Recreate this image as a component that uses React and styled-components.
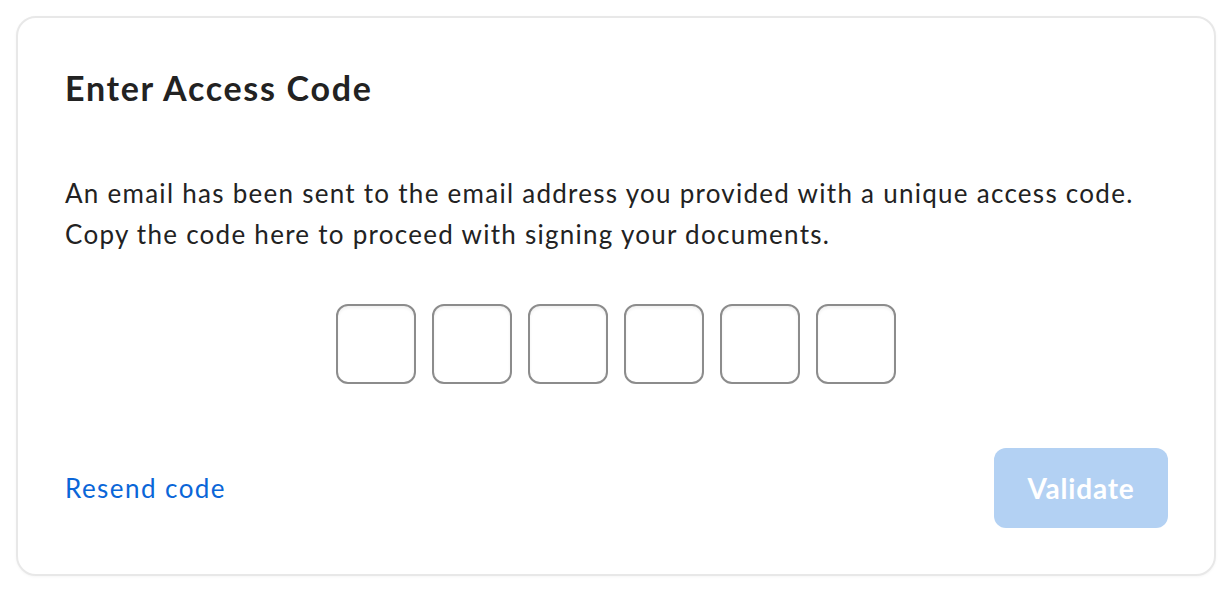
import React from "react";
import styled, { createGlobalStyle } from "styled-components";

const GlobalStyle = createGlobalStyle`
  html, body {
    margin: 0;
    padding: 0;
    background: #ffffff;
  }
  body {
    font-family: Lato, "Noto Sans", "Liberation Sans", sans-serif;
    color: #222222;
  }
  * { box-sizing: border-box; }
`;

const Page = styled.div`
  padding: 16px;
  width: 1232px;
`;

const Card = styled.section`
  width: 1200px;
  height: 560px;
  border: 2px solid #e8e8e8;
  border-radius: 20px;
  background: #ffffff;
  box-shadow: 0 1px 3px rgba(0, 0, 0, 0.04);
  padding: 46px 46px 46px 47px;
  display: flex;
  flex-direction: column;
`;

const Title = styled.h1`
  margin: 0;
  font-size: 34px;
  line-height: 48px;
  font-weight: 700;
  letter-spacing: 1.7px;
  color: #222222;
`;

const Message = styled.p`
  margin: 61px 0 0;
  font-size: 26px;
  line-height: 41px;
  font-weight: 400;
  letter-spacing: 1.27px;
  color: #222222;
`;

const CodeRow = styled.div`
  display: flex;
  justify-content: center;
  gap: 16px;
  margin-top: 49px;
  padding-right: 2px;
`;

const CodeBox = styled.input`
  width: 80px;
  height: 80px;
  border: 2px solid #8c8c8c;
  border-radius: 12px;
  background: #ffffff;
  box-shadow: inset 0 2px 3px rgba(0, 0, 0, 0.06);
  font-family: inherit;
  font-size: 32px;
  text-align: center;
  outline: none;
`;

const Footer = styled.div`
  margin-top: auto;
  display: flex;
  align-items: center;
  justify-content: space-between;
`;

const ResendLink = styled.a`
  font-size: 26px;
  letter-spacing: 1.45px;
  color: #0a66d8;
  text-decoration: none;
  cursor: pointer;
`;

const ValidateButton = styled.button`
  width: 174px;
  height: 80px;
  border: none;
  border-radius: 12px;
  background: #b3d1f3;
  color: #ffffff;
  font-family: inherit;
  font-size: 28px;
  font-weight: 700;
  letter-spacing: 0.8px;
  cursor: not-allowed;
`;

export default function App() {
  const slots = [0, 1, 2, 3, 4, 5];
  return (
    <>
      <GlobalStyle />
      <Page>
        <Card>
          <Title>Enter Access Code</Title>
          <Message>
            An email has been sent to the email address you provided with a unique access code.
            <br />
            Copy the code here to proceed with signing your documents.
          </Message>
          <CodeRow>
            {slots.map((i) => (
              <CodeBox key={i} maxLength={1} aria-label={`Digit ${i + 1}`} />
            ))}
          </CodeRow>
          <Footer>
            <ResendLink>Resend code</ResendLink>
            <ValidateButton disabled>Validate</ValidateButton>
          </Footer>
        </Card>
      </Page>
    </>
  );
}
